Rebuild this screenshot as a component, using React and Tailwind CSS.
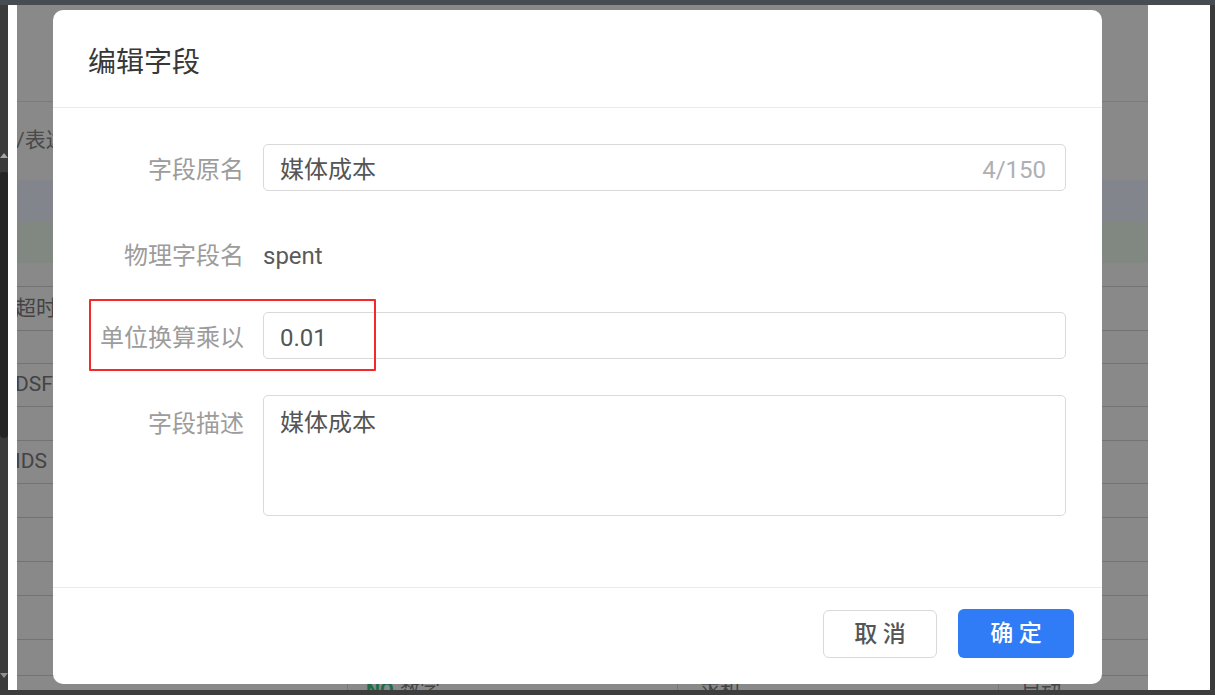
import React from "react";

const ghostRows = [
  { h: 24 },
  { h: 44, t: "超时" },
  { h: 33 },
  { h: 43, t: "DSF" },
  { h: 34 },
  { h: 43, t: "IDS" },
  { h: 34 },
  { h: 44 },
  { h: 34 },
  { h: 44 },
  { h: 36 },
];

function Label({ children }) {
  return (
    <div className="w-[191px] h-[36px] shrink-0 text-right text-[24px] leading-[40px] text-[#9c9c9c] whitespace-nowrap">
      {children}
    </div>
  );
}

export default function App() {
  return (
    <div className="w-[1215px] h-[695px] bg-[#3d3d3d] flex flex-col overflow-hidden font-['Roboto','Noto_Sans_CJK_SC',sans-serif]">
      <div className="h-[5px] shrink-0 bg-[#474c52]" />
      <div className="flex flex-1 min-h-0">
        {/* left scrollbar */}
        <div className="w-[8px] shrink-0 bg-[#3b3b3b] flex flex-col items-center">
          <div className="h-[148px] shrink-0" />
          <div className="w-0 h-0 border-l-[4px] border-r-[4px] border-b-[5px] border-l-transparent border-r-transparent border-b-[#a5a5a5]" />
          <div className="h-[14px] shrink-0" />
          <div className="w-[8px] h-[266px] bg-[#252525] rounded-b-[4px] rounded-t-[2px]" />
          <div className="flex-1" />
          <div className="w-0 h-0 border-l-[4px] border-r-[4px] border-t-[5px] border-l-transparent border-r-transparent border-t-[#8f8f8f]" />
          <div className="h-[12px] shrink-0" />
        </div>
        <div className="w-[9px] shrink-0 bg-white" />
        {/* dimmed page */}
        <div className="relative w-[1131px] shrink-0 bg-[#898989] overflow-hidden">
          <div className="h-[97px] border-b border-[#7b7b7b]" />
          <div className="h-[78px] flex items-center">
            <span className="text-[21px] text-[#4a4a4a] whitespace-nowrap -ml-[1px]">/表达式</span>
          </div>
          <div className="h-[42px] bg-[#82858c]" />
          <div className="h-[41px] bg-[#818781]" />
          {ghostRows.map((r, i) => (
            <div
              key={i}
              className="border-b border-[#737373] flex items-center"
              style={{ height: r.h }}
            >
              {r.t && (
                <span className="text-[21px] text-[#434343] whitespace-nowrap -ml-[2px]">{r.t}</span>
              )}
            </div>
          ))}
          <div className="flex items-start h-[20px] pt-[2px] text-[20px] leading-[24px] text-[#444]">
            <div className="w-[330px]" />
            <div className="w-[1px] h-[20px] bg-[#777]" />
            <span className="ml-[18px] text-[#1f6b45] font-bold">NO</span>
            <span className="ml-[6px]">数字</span>
            <div className="w-[237px]" />
            <div className="w-[1px] h-[20px] bg-[#777]" />
            <span className="ml-[22px]">求和</span>
            <div className="w-[258px]" />
            <div className="w-[1px] h-[20px] bg-[#777]" />
            <span className="ml-[22px]">自动</span>
          </div>

          {/* modal */}
          <div className="absolute left-[36px] top-[5px] w-[1049px] h-[674px] bg-white rounded-[10px] flex flex-col">
            <div className="h-[98px] shrink-0 border-b border-[#e9e9e9] flex items-center pl-[35px] pt-[8px]">
              <span className="text-[28px] text-[#383838]">编辑字段</span>
            </div>
            <div className="flex-1 pt-[36px] pr-[36px]">
              <div className="flex items-center">
                <Label>字段原名</Label>
                <div className="ml-[19px] flex-1 h-[47px] border border-[#d9d9d9] rounded-[5px] flex items-center pl-[16px] pr-[19px] pt-[4px]">
                  <span className="flex-1 text-[24px] text-[#555]">媒体成本</span>
                  <span className="text-[24px] text-[#aeb0b4]">4/150</span>
                </div>
              </div>
              <div className="flex items-center h-[47px] mt-[39px]">
                <Label>物理字段名</Label>
                <span className="ml-[19px] text-[24px] leading-[36px] h-[36px] pt-[2px] text-[#5a5a5a]">spent</span>
              </div>
              <div className="flex items-center mt-[35px]">
                <Label>单位换算乘以</Label>
                <div className="ml-[19px] flex-1 h-[47px] border border-[#d9d9d9] rounded-[5px] flex items-center pl-[16px] pt-[4px]">
                  <span className="text-[24px] text-[#555]">0.01</span>
                </div>
              </div>
              <div className="flex items-start mt-[36px]">
                <div className="pt-[9px]">
                  <Label>字段描述</Label>
                </div>
                <div className="ml-[19px] flex-1 h-[121px] border border-[#d9d9d9] rounded-[5px] pl-[16px] pt-[9px]">
                  <span className="text-[24px] leading-[36px] text-[#555]">媒体成本</span>
                </div>
              </div>
            </div>
            <div className="h-[97px] shrink-0 border-t border-[#e9e9e9] flex justify-end items-start pt-[22px] pr-[28px] gap-[21px]">
              <button className="w-[114px] h-[48px] border border-[#d9d9d9] rounded-[6px] bg-white text-[23px] font-medium text-[#555] flex items-center justify-center pt-[2px]">
                取&nbsp;消
              </button>
              <button className="w-[116px] h-[49px] -mt-[1px] rounded-[6px] bg-[#2f7cf6] text-[23px] font-medium text-white flex items-center justify-center pt-[2px]">
                确&nbsp;定
              </button>
            </div>
            {/* red highlight */}
            <div className="absolute left-[36px] top-[289px] w-[287px] h-[72px] border-2 border-[#f22a2a] rounded-[1px]" />
          </div>
        </div>
        <div className="w-[62px] shrink-0 bg-white" />
        <div className="w-[5px] shrink-0 bg-[#3a3a3a]" />
      </div>
      <div className="h-[5px] shrink-0 bg-[#3d3d3d]" />
    </div>
  );
}
